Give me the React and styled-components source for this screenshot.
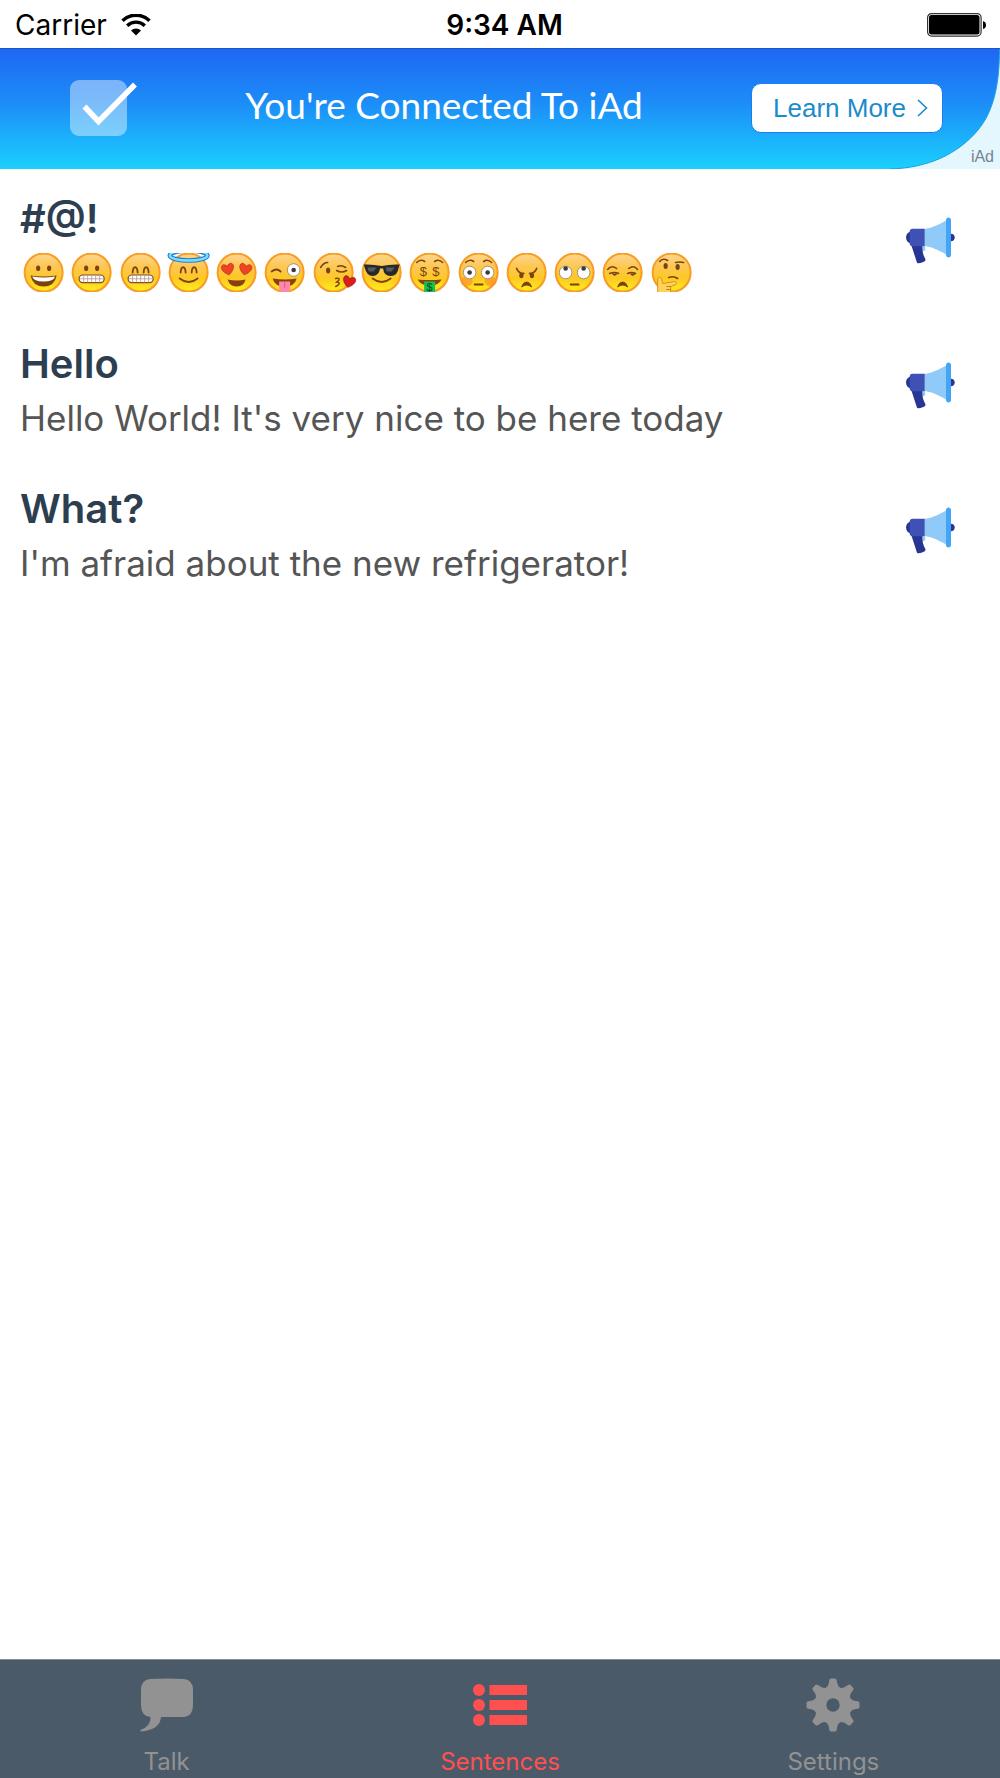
import React, { useState } from 'react'
import styled, { createGlobalStyle } from 'styled-components'
import { FcAdvertising } from 'react-icons/fc'

const GlobalStyle = createGlobalStyle`
  * {
    box-sizing: border-box;
  }

  body {
    margin: 0;
    background: #fff;
    font-family: Inter, "Liberation Sans", sans-serif;
  }

  button {
    font: inherit;
    border: 0;
    padding: 0;
    background: none;
    cursor: pointer;
  }
`

const Screen = styled.div`
  display: flex;
  flex-direction: column;
  min-height: 100vh;
`

const StatusBar = styled.header`
  display: grid;
  grid-template-columns: 1fr auto 1fr;
  align-items: center;
  height: 48px;
  padding: 2px 14px 0 15px;
  font-size: 28px;
  line-height: 34px;
  color: #000;
`

const Carrier = styled.div`
  display: flex;
  align-items: center;
  gap: 14px;
`

const Time = styled.time`
  padding-left: 8px;
  font-weight: 600;
`

const BatteryIcon = styled.svg`
  justify-self: end;
`

const Banner = styled.section`
  position: relative;
  display: flex;
  align-items: center;
  height: 121px;
  padding: 0 57px 2px 70px;
  border-top: 1px solid #1b57c8;
  background: linear-gradient(#1e68f2, #1c8df8 45%, #1bd0fe);
`

const BannerTitle = styled.h2`
  flex: 1;
  margin: 0;
  padding-bottom: 6px;
  font-family: Lato, "Noto Sans", sans-serif;
  font-size: 37px;
  font-weight: 400;
  line-height: 48px;
  text-align: center;
  color: #fff;
`

const LearnMore = styled.button`
  && {
    display: flex;
    align-items: center;
    gap: 11px;
    height: 50px;
    padding: 0 14px 0 21px;
    border: 1px solid #1c7df0;
    border-radius: 10px;
    background: #fff;
    font-family: "Liberation Sans", Arial, sans-serif;
    font-size: 26px;
    color: #1a8ccb;
    z-index: 1;
  }
`

const Corner = styled.svg`
  position: absolute;
  right: 0;
  bottom: 0;
`

const AdMark = styled.span`
  position: absolute;
  right: 6px;
  bottom: 2px;
  font-family: "Liberation Sans", Arial, sans-serif;
  font-size: 16px;
  line-height: 20px;
  color: #75858d;
`

const List = styled.ul`
  flex: 1;
  margin: 0;
  padding: 0;
  list-style: none;
`

const Row = styled.li`
  display: flex;
  align-items: center;
  justify-content: space-between;
  height: 145px;
  padding: 0 39px 3px 20px;
`

const RowText = styled.div`
  padding-top: 9px;
`

const RowTitle = styled.h3`
  margin: 0 0 8px;
  font-size: 40px;
  font-weight: 600;
  line-height: 48px;
  color: #2c3e50;
`

const RowBody = styled.p`
  margin: 0;
  font-size: 35px;
  line-height: 44px;
  color: #555;
`

const EmojiLine = styled.div`
  display: grid;
  grid-template-columns: repeat(14, 1fr);
  width: 676px;
  height: 44px;
  padding-top: 2px;

  svg {
    width: 100%;
    height: 39px;
  }
`

const SpeakButton = styled.button`
  display: flex;
  font-size: 60px;
`

const TabBar = styled.nav`
  display: grid;
  grid-template-columns: repeat(3, 1fr);
  height: 119px;
  border-top: 1px solid #858d92;
  background: #4b5a69;
`

const Tab = styled.button`
  && {
    display: flex;
    flex-direction: column;
    align-items: center;
    gap: 16px;
    padding-top: 18px;
    font-size: 24px;
    line-height: 28px;
    color: ${props => (props.$active ? '#ff5050' : '#929292')};
  }
`

const INK = '#7a4310'

const stroke = (color, width) => ({
  fill: 'none',
  stroke: color,
  strokeWidth: width,
  strokeLinecap: 'round'
})

const HEART = 'M0 6C-8 1-7-5-3.500-5C-1.500-5 0-3 0-2C0-3 1.500-5 3.500-5C7-5 8 1 0 6Z'

const DotEyes = ({ y = -4.3, x = 5.5 }) => (
  <g fill={INK}>
    <ellipse cx={-x} cy={y} rx="2.1" ry="2.800" />
    <ellipse cx={x} cy={y} rx="2.1" ry="2.800" />
  </g>
)

const ArchEyes = () => (
  <path d="M-8 0C-7.500-7-3.500-7-3 0M3 0C3.500-7 7.500-7 8 0" {...stroke(INK, 1.8)} />
)

const Brows = () => (
  <path d="M-13-10Q-9-14-5-11M13-10Q9-14 5-11" {...stroke(INK, 1.6)} />
)

const Teeth = () => (
  <g>
    <rect x="-12.500" y="2.500" width="25" height="7.600" rx="3.600" fill="#fff" stroke="#7d4a2a" strokeWidth="1.200" />
    <path d="M-12 6.300H12M-8 3V10M-4 3V10M0 3V10M4 3V10M8 3V10" stroke="#a98a84" strokeWidth=".7" />
  </g>
)

const Smile = () => <path d="M-9 6Q0 13 9 6" {...stroke(INK, 1.8)} />

const Frown = () => (
  <path d="M-5 14.500Q-3.500 9.500 0 9.500T5 14.500Q0 10.500-5 14.500Z" fill={INK} stroke={INK} />
)

const WideEye = ({ x, y = 0, pupilY = 0 }) => (
  <g>
    <circle cx={x} cy={y} r="6.300" fill="#fff" stroke="#9c8a77" strokeWidth=".9" />
    <circle cx={x} cy={y + pupilY} r="2.300" fill="#3a3a3e" />
  </g>
)

// Features are drawn around the centre of the face
const faces = [
  {
    label: 'grinning',
    art: (
      <g>
        <DotEyes />
        <path d="M-13 3Q0 5 13 3Q11 14 0 14T-13 3Z" fill={INK} />
        <path d="M-11.500 4Q0 6 11.500 4Q10 9 0 9T-11.500 4Z" fill="#fff" />
      </g>
    )
  },
  { label: 'grimacing', art: <g><DotEyes /><Teeth /></g> },
  { label: 'beaming', art: <g><ArchEyes /><Teeth /></g> },
  {
    label: 'halo',
    art: (
      <g>
        <ellipse cx="0" cy="-17" rx="18.800" ry="5" {...stroke('#1782d8', 4.6)} />
        <ellipse cx="0" cy="-17" rx="18.800" ry="5" {...stroke('#7fdcff', 2.4)} />
        <ArchEyes />
        <Smile />
      </g>
    )
  },
  {
    label: 'heart eyes',
    art: (
      <g>
        <path d={HEART} transform="translate(-8.800 -3.500) rotate(-12)" fill="#ee4423" stroke="#c42a15" strokeWidth=".7" />
        <path d={HEART} transform="translate(8.800 -3.500) rotate(12)" fill="#ee4423" stroke="#c42a15" strokeWidth=".7" />
        <path d="M-9 7Q0 9 9 7Q7 14 0 14T-9 7Z" fill="#87400e" />
      </g>
    )
  },
  {
    label: 'winking with tongue',
    art: (
      <g>
        <path d="M-13-1Q-8-5-4-1" {...stroke(INK, 1.8)} />
        <WideEye x={9} y={-2.5} />
        <path d="M-12 6Q0 8 12 6Q10 14 0 14T-12 6Z" fill="#87400e" />
        <path d="M-5.500 9H5.500V16Q5 20 0 20T-5.500 16Z" fill="#ff87ac" />
        <path d="M0 10V15" {...stroke('#e05886', 1)} />
      </g>
    )
  },
  {
    label: 'blowing a kiss',
    art: (
      <g>
        <ellipse cx="-5.500" cy="-2" rx="2.100" ry="3" fill={INK} />
        <path d="M-13-5Q-10-10-6-10M4-6Q8-8 12-5M3-2Q8 1 13-2" {...stroke(INK, 1.6)} />
        <path d="M2 6Q7 5 5 8L3 9.500Q7 10 5 12T2 14" {...stroke(INK, 1.4)} />
        <path d={HEART} transform="translate(15.500 9) rotate(14)" fill="#d6201b" stroke="#a8120f" strokeWidth=".7" />
      </g>
    )
  },
  {
    label: 'sunglasses',
    art: (
      <g>
        <path d="M-18-8Q-9-8.500 0-6.500Q9-8.500 18-8L17-5Q16 3.500 9 3.500T1.500-4H-1.500Q-3 3.500-9 3.500T-17-5Z" fill="#26282c" />
        <path d="M-14-5H-5L-8-1H-13ZM4-5H13L10-1H5Z" fill="#555a60" />
        <Smile />
      </g>
    )
  },
  {
    label: 'money mouth',
    art: (
      <g>
        <Brows />
        <text x="-6.300" y="3" textAnchor="middle" fontFamily="Liberation Sans" fontSize="13" fill={INK}>$</text>
        <text x="6.300" y="3" textAnchor="middle" fontFamily="Liberation Sans" fontSize="13" fill={INK}>$</text>
        <path d="M-12 7Q0 8 12 7Q9 13 0 13T-12 7Z" fill="#87400e" />
        <path d="M-5.500 9H5.500V20H-5.500Z" fill="#17c14e" />
        <text x="0" y="18.500" textAnchor="middle" fontFamily="Liberation Sans" fontSize="11" fill="#0c4a1f">$</text>
      </g>
    )
  },
  {
    label: 'flushed',
    art: (
      <g>
        <ellipse cx="-12" cy="9" rx="6" ry="5" fill="#ff8a2b" opacity=".6" />
        <ellipse cx="12" cy="9" rx="6" ry="5" fill="#ff8a2b" opacity=".6" />
        <Brows />
        <WideEye x={-9} />
        <WideEye x={9} />
        <path d="M-4 12H4" {...stroke(INK, 1.8)} />
      </g>
    )
  },
  {
    label: 'angry',
    art: (
      <g>
        <DotEyes y={3} x={5.3} />
        <path d="M-10-4Q-8 1-3 1M10-4Q8 1 3 1" {...stroke(INK, 1.8)} />
        <Frown />
      </g>
    )
  },
  {
    label: 'rolling eyes',
    art: (
      <g>
        <WideEye x={-9} pupilY={-4} />
        <WideEye x={9} pupilY={-4} />
        <path d="M-4 12H4" {...stroke(INK, 1.8)} />
      </g>
    )
  },
  {
    label: 'unamused',
    art: (
      <g>
        <path d="M-15-3Q-11-8-6-4M15-3Q11-8 6-4M-13 1Q-8-1-4 1M5 1Q9-1 13 1" {...stroke(INK, 1.6)} />
        <path d="M-11 1H-5Q-7 4-9 3ZM7 1H13Q11 4 9 3Z" fill={INK} />
        <Frown />
      </g>
    )
  },
  {
    label: 'thinking',
    art: (
      <g>
        <ellipse cx="-6" cy="-6.500" rx="2.100" ry="3" fill={INK} />
        <ellipse cx="6" cy="-5.500" rx="2.100" ry="3" fill={INK} />
        <path d="M-12-11Q-9-15-4-12M4-10Q8-11 12-10M-3 5Q2 3 6 6" {...stroke(INK, 1.6)} />
        <path d="M-14 6Q-12 3-10 6L-9 11L3 9Q6 9 4 12L-1 14V20H-14Z" fill="#ffd25c" stroke="#d48a1d" strokeWidth=".9" />
        <path d="M-1 14H-5M-1 17H-5" {...stroke('#c57d1b', 1)} />
      </g>
    )
  }
]

const Emoji = ({ label, children }) => (
  <svg viewBox="0 0 48 39" role="img" aria-label={label}>
    <defs>
      <linearGradient id="skin" x1="0" y1="0" x2="0" y2="1">
        <stop offset="0" stopColor="#fdd791" />
        <stop offset=".35" stopColor="#fdc752" />
        <stop offset=".65" stopColor="#fdc824" />
        <stop offset="1" stopColor="#ffee1a" />
      </linearGradient>
    </defs>
    <g transform="translate(23.500 19.500)">
      <circle cy="1" r="19.400" fill="#c9b8a0" />
      <circle r="19" fill="url(#skin)" stroke="#fb9c22" strokeWidth="2" />
      {children}
    </g>
  </svg>
)

const WifiIcon = () => (
  <svg width="30" height="22" viewBox="0 0 30 22" role="img" aria-label="Wi-Fi">
    <path d="M1.500 6.700A19.500 19.500 0 0 1 28.500 6.700" fill="none" stroke="#000" strokeWidth="3.600" />
    <path d="M6.200 11.700A12.600 12.600 0 0 1 23.800 11.700" fill="none" stroke="#000" strokeWidth="3.400" />
    <path d="M10 16.500A7.200 7.200 0 0 1 20 16.500L15 21.500Z" />
  </svg>
)

const CheckIcon = () => (
  <svg width="67" height="58" viewBox="0 0 67 58" aria-hidden="true">
    <rect y="1" width="57" height="56" rx="9" fill="#fff" opacity=".42" />
    <path d="M14.500 27.500L28.500 42.500L65 5.500" fill="none" stroke="#fff" strokeWidth="5.500" />
  </svg>
)

const TalkIcon = () => (
  <svg width="54" height="54" viewBox="0 0 54 54" fill="currentColor" aria-hidden="true">
    <path d="M10 1Q26 0 44 1Q53 2 53 12V27Q53 38 44 39H21Q20 52 .5 53.500V52Q11 48 10.500 39Q1 38 1 27V12Q1 2 10 1Z" />
  </svg>
)

const SentencesIcon = () => (
  <svg width="54" height="54" viewBox="0 0 54 54" fill="currentColor" aria-hidden="true">
    {[12, 27, 42].map(y => (
      <g key={y}>
        <circle cx="6" cy={y} r="6" />
        <rect x="16.500" y={y - 5} width="37.500" height="10" />
      </g>
    ))}
  </svg>
)

const SettingsIcon = () => (
  <svg width="54" height="54" viewBox="-27 -27 54 54" aria-hidden="true">
    <defs>
      <mask id="hub">
        <rect x="-27" y="-27" width="54" height="54" fill="#fff" />
        <circle r="6.700" fill="#000" />
      </mask>
    </defs>
    <g fill="currentColor" mask="url(#hub)">
      <circle r="18.500" />
      {[0, 45, 90, 135, 180, 225, 270, 315].map(angle => (
        <path
          key={angle}
          transform={`rotate(${angle})`}
          d="M-9-16Q-4.500-18-4-23Q-3.800-26.500-2-26.500H2Q3.800-26.500 4-23Q4.500-18 9-16Z"
        />
      ))}
    </g>
  </svg>
)

const tabs = [
  { name: 'Talk', Icon: TalkIcon },
  { name: 'Sentences', Icon: SentencesIcon },
  { name: 'Settings', Icon: SettingsIcon }
]

const sentences = [
  { title: '#@!', emoji: true },
  { title: 'Hello', body: "Hello World! It's very nice to be here today" },
  { title: 'What?', body: "I'm afraid about the new refrigerator!" }
]

const App = () => {
  const [active, setActive] = useState('Sentences')

  return (
    <Screen>
      <GlobalStyle />
      <StatusBar>
        <Carrier>
          Carrier
          <WifiIcon />
        </Carrier>
        <Time>9:34 AM</Time>
        <BatteryIcon width="59" height="24" viewBox="0 0 59 24" role="img" aria-label="Battery full">
          <rect x=".6" y=".6" width="53.500" height="22.500" rx="4" fill="#fff" stroke="#333" strokeWidth="1.200" />
          <rect x="2" y="2" width="50.500" height="19.500" rx="2.500" />
          <path d="M56 8Q59 9 59 12T56 16Z" />
        </BatteryIcon>
      </StatusBar>
      <Banner>
        <CheckIcon />
        <BannerTitle>You're Connected To iAd</BannerTitle>
        <Corner width="110" height="120" viewBox="0 0 110 120" aria-hidden="true">
          <path d="M109.500 0C109.500 34 104 62 88 81C68 105 38 119 0 120H110V0Z" fill="#e4f7ff" />
          <path d="M109.500 0C109.500 34 104 62 88 81C68 105 38 119 0 120" fill="none" stroke="#1a9fdc" />
        </Corner>
        <LearnMore type="button">
          Learn More
          <svg width="11" height="18" viewBox="0 0 11 18" aria-hidden="true">
            <path d="M1 1L9.500 9L1 17" fill="none" stroke="#1a8ccb" strokeWidth="1.600" />
          </svg>
        </LearnMore>
        <AdMark>iAd</AdMark>
      </Banner>
      <List>
        {sentences.map(({ title, body, emoji }) => (
          <Row key={title}>
            <RowText>
              <RowTitle>{title}</RowTitle>
              {emoji ? (
                <EmojiLine>
                  {faces.map(({ label, art }) => (
                    <Emoji key={label} label={label}>{art}</Emoji>
                  ))}
                </EmojiLine>
              ) : (
                <RowBody>{body}</RowBody>
              )}
            </RowText>
            <SpeakButton type="button" aria-label={`Speak ${title}`}>
              <FcAdvertising />
            </SpeakButton>
          </Row>
        ))}
      </List>
      <TabBar>
        {tabs.map(({ name, Icon }) => (
          <Tab key={name} type="button" $active={name === active} onClick={() => setActive(name)}>
            <Icon />
            {name}
          </Tab>
        ))}
      </TabBar>
    </Screen>
  )
}

export default App
